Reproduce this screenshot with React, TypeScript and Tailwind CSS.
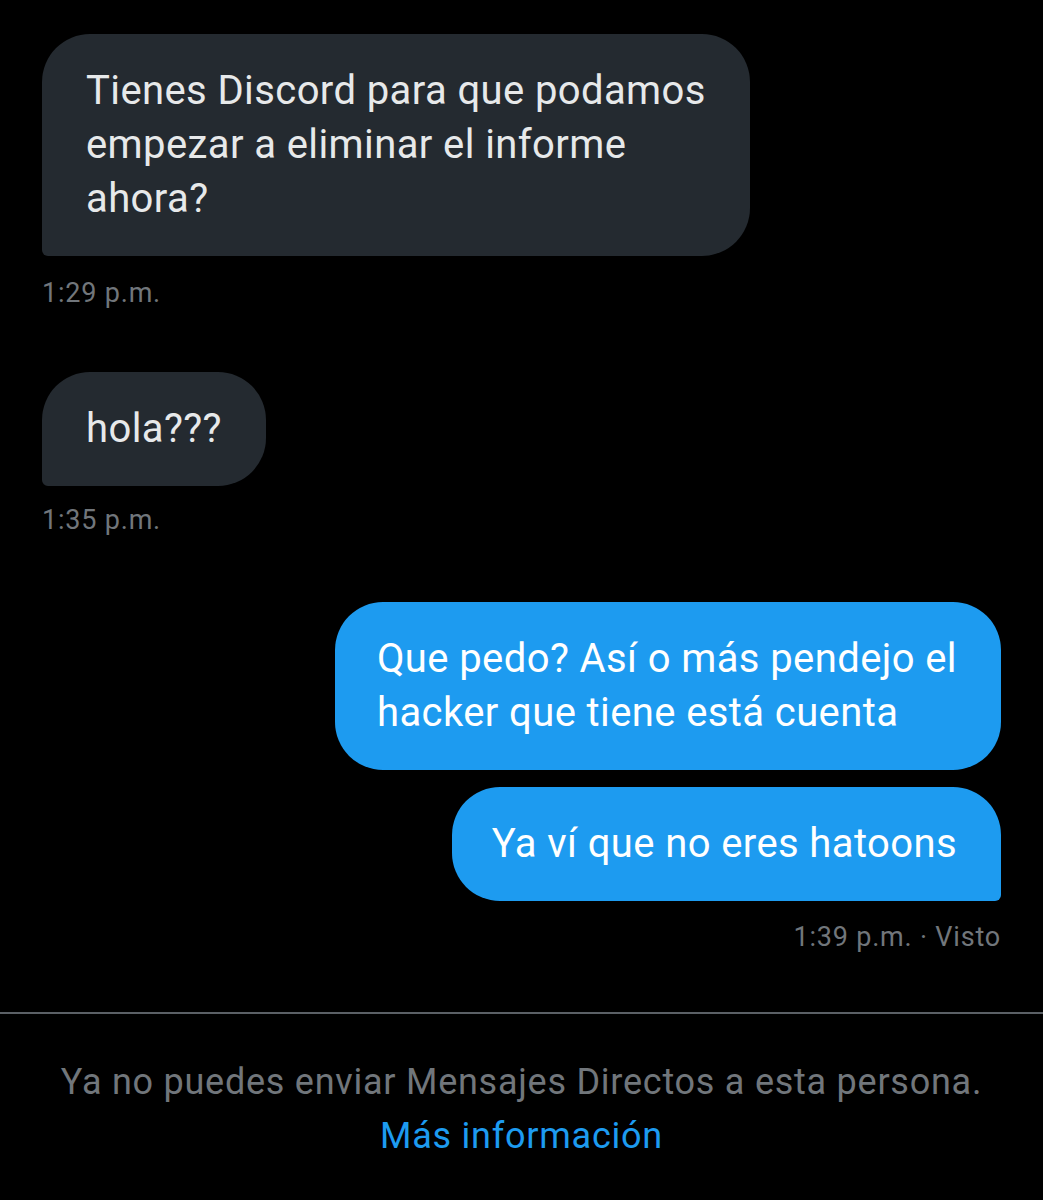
export default function App() {
  const bubble = "w-fit text-[40px] leading-[54px] tracking-[0.4px] px-[44px] py-[30px] rounded-[48px] whitespace-nowrap";
  return (
    <div className="w-[1043px] h-[1200px] bg-black overflow-hidden" style={{ fontFamily: "Roboto, 'Noto Sans', sans-serif" }}>
      <div className="px-[42px] pt-[34px] flex flex-col">
        <div className={`${bubble} self-start bg-[#242a30] text-[#e7e9ea] rounded-bl-[6px]`}>
          Tienes Discord para que podamos
          <br />
          empezar a eliminar el informe
          <br />
          ahora?
        </div>
        <div className="mt-[20px] text-[27px] leading-[34px] tracking-[0.8px] text-[#71767b]">1:29 p.m.</div>
        <div className={`${bubble} mt-[62px] self-start bg-[#242a30] text-[#e7e9ea] rounded-bl-[6px]`}>hola???</div>
        <div className="mt-[17px] text-[27px] leading-[34px] tracking-[0.8px] text-[#71767b]">1:35 p.m.</div>
        <div className={`${bubble} mt-[65px] self-end bg-[#1d9bf0] text-white pl-[42px]`}>
          Que pedo? Así o más pendejo el
          <br />
          hacker que tiene está cuenta
        </div>
        <div className={`${bubble} mt-[17px] self-end bg-[#1d9bf0] text-white rounded-br-[6px] pl-[40px]`}>Ya ví que no eres hatoons</div>
        <div className="mt-[19px] self-end text-[27px] leading-[34px] tracking-[0.8px] text-[#71767b]">1:39 p.m. · Visto</div>
      </div>
      <div className="mt-[58px] h-[2px] bg-[#5b6066]" />
      <div className="pt-[41px] flex flex-col items-center text-[36px] leading-[54px] tracking-[0.75px]">
        <div className="text-[#71767b]">Ya no puedes enviar Mensajes Directos a esta persona.</div>
        <div className="text-[#1d9bf0]">Más información</div>
      </div>
    </div>
  );
}
